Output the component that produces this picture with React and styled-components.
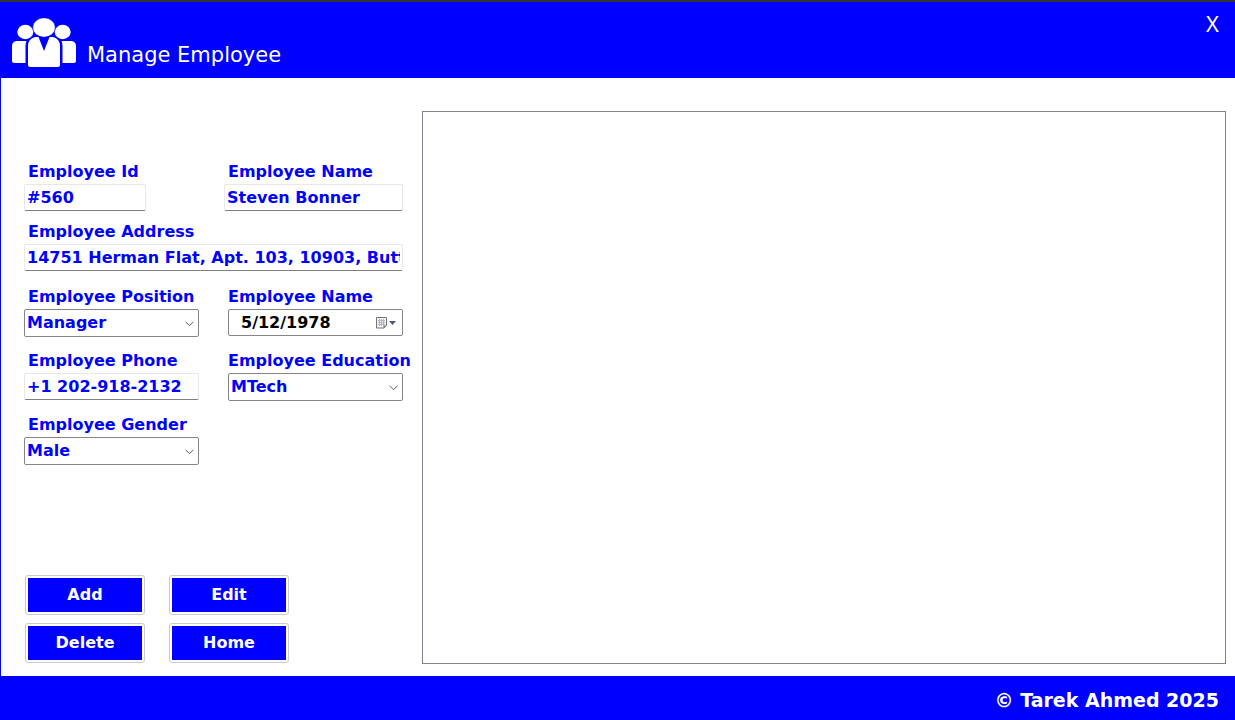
import React from "react";
import styled, { createGlobalStyle } from "styled-components";

const blue = "#0000ff";

const GlobalStyle = createGlobalStyle`
  * { box-sizing: border-box; }
  body {
    margin: 0;
    background: #fff;
    color: ${blue};
    font: bold 16px/20px "DejaVu Sans", Verdana, sans-serif;
  }
  input, select, button { font: inherit; color: inherit; margin: 0; }
`;

const Window = styled.div`
  min-height: 100vh;
  display: flex;
  flex-direction: column;
  border-top: 2px solid #333;
`;

const Header = styled.header`
  height: 76px;
  display: flex;
  align-items: flex-start;
  gap: 11px;
  padding: 7px 12px 0;
  background: ${blue};
  color: #fff;
`;

const Title = styled.h1`
  flex: 1;
  margin: 32px 0 0;
  font-size: 21px;
  line-height: 28px;
  font-weight: normal;
`;

const CloseButton = styled.button`
  padding: 0 4px;
  border: 0;
  background: none;
  font: 22px/28px "Noto Sans", sans-serif;
`;

const Logo = styled.svg`
  flex: none;
  margin-top: 9px;
`;

const Main = styled.main`
  flex: 1;
  display: flex;
  gap: 19px;
  padding: 33px 9px 12px 23px;
  border-left: 1px solid ${blue};
`;

const Form = styled.form`
  width: 379px;
  flex: none;
  display: flex;
  flex-direction: column;
  gap: 16px;
  padding-top: 51px;
`;

const Group = styled.div`
  display: flex;
  flex-direction: column;
  gap: ${(p) => p.$gap}px;
`;

const Row = styled.div`
  display: flex;
  justify-content: space-between;
`;

const FieldBox = styled.div`
  display: flex;
  flex-direction: column;
  gap: 2px;
  width: ${(p) => p.$width};
`;

const Label = styled.label`
  padding-left: ${(p) => (p.$flush ? 0 : 4)}px;
  white-space: nowrap;
`;

const TextInput = styled.input`
  width: 100%;
  height: 27px;
  padding: 0 2px;
  border: 1px solid #e8e8e8;
  border-bottom-color: #808080;
  border-radius: 2px;
  background: #fff;
  outline: none;
`;

const Framed = styled.div`
  position: relative;
  display: flex;
  align-items: center;
  height: ${(p) => p.$height}px;
  border: 1px solid #858585;
  border-radius: 2px;
  background: #fff;
`;

const Select = styled.select`
  width: 100%;
  height: 100%;
  padding: 0 20px 1px 2px;
  border: 0;
  background: none;
  appearance: none;
  outline: none;
`;

const Chevron = styled.svg`
  position: absolute;
  right: 4px;
  top: 11px;
  pointer-events: none;
`;

const DateInput = styled.input`
  flex: 1;
  min-width: 0;
  height: 100%;
  padding: 0 0 1px 12px;
  border: 0;
  background: none;
  color: #000;
  outline: none;
`;

const CalendarButton = styled.button`
  display: flex;
  padding: 0 5px 0 0;
  border: 0;
  background: none;
`;

const Actions = styled.div`
  display: grid;
  grid-template-columns: 120px 120px;
  gap: 8px 24px;
  margin: auto 0 1px 1px;
`;

const ActionButton = styled.button`
  height: 40px;
  padding: 2px;
  border: 1px solid #ccc;
  border-radius: 3px;
  background: ${blue} content-box;
  color: #fff;
`;

const Records = styled.section`
  flex: 1;
  border: 1px solid #828290;
`;

const Footer = styled.footer`
  height: 44px;
  padding: 12px 16px 0;
  background: ${blue};
  color: #fff;
  font-size: 19px;
  line-height: 24px;
  text-align: right;
`;

function PeopleIcon() {
  return (
    <Logo width="64" height="50" viewBox="0 0 64 50" fill="#fff" aria-hidden="true">
      <ellipse cx="13.3" cy="14" rx="8" ry="7.2" />
      <ellipse cx="50.7" cy="14" rx="8" ry="7.2" />
      <path d="M4 23h10.5Q13.500 25 13.500 28v17H2Q0 45 0 43V28Q0 24 4 23Z" />
      <path d="M60 23H49.500Q50.500 25 50.500 28v17H62Q64 45 64 43V28Q64 24 60 23Z" />
      <ellipse cx="32" cy="9.500" rx="11.200" ry="9.700" stroke={blue} strokeWidth="0.5" />
      <path d="M23 19h3.500L32 33l5.500-14H41Q48 21 48 28v19Q48 49 46 49H18Q16 49 16 47V28Q16 21 23 19Z" />
    </Logo>
  );
}

function CalendarIcon() {
  return (
    <svg width="22" height="14" viewBox="0 0 22 14" aria-hidden="true">
      <path d="M1.500 1.500h10v8l-2.500 2.500H1.500z" fill="#f2f2f2" stroke="#767070" />
      <path d="M3 4.500h7M3 6.500h7M3 8.500h7M4.500 3v7M6.500 3v7M8.500 3v7" stroke="#b0b8c0" />
      <path d="M8.500 12.500v-3h3.500z" fill="#8a8080" />
      <path d="M14 5h7l-3.500 4z" fill="#44597d" />
    </svg>
  );
}

function TextField({ id, label, value, width }) {
  return (
    <FieldBox $width={width}>
      <Label htmlFor={id}>{label}</Label>
      <TextInput id={id} defaultValue={value} />
    </FieldBox>
  );
}

function SelectField({ id, label, value, flush }) {
  return (
    <FieldBox $width="175px">
      <Label htmlFor={id} $flush={flush}>{label}</Label>
      <Framed $height={28}>
        <Select id={id} defaultValue={value}>
          <option>{value}</option>
        </Select>
        <Chevron width="9" height="6" viewBox="0 0 9 6" fill="none" stroke="#606060">
          <path d="M0.500 0.700l4 4 4-4" />
        </Chevron>
      </Framed>
    </FieldBox>
  );
}

export default function App() {
  return (
    <>
      <GlobalStyle />
      <Window>
        <Header>
          <PeopleIcon />
          <Title>Manage Employee</Title>
          <CloseButton type="button">X</CloseButton>
        </Header>
        <Main>
          <Form onSubmit={(e) => e.preventDefault()}>
            <Group $gap={11}>
              <Row>
                <TextField id="emp-id" label="Employee Id" value="#560" width="122px" />
                <TextField id="emp-name" label="Employee Name" value="Steven Bonner" width="179px" />
              </Row>
              <TextField
                id="emp-address"
                label="Employee Address"
                value="14751 Herman Flat, Apt. 103, 10903, Butte"
                width="100%"
              />
            </Group>
            <Group $gap={14}>
              <Row>
                <SelectField id="emp-position" label="Employee Position" value="Manager" />
                <FieldBox $width="175px">
                  <Label htmlFor="emp-date" $flush>Employee Name</Label>
                  <Framed $height={27}>
                    <DateInput id="emp-date" defaultValue="5/12/1978" />
                    <CalendarButton type="button" aria-label="Open calendar">
                      <CalendarIcon />
                    </CalendarButton>
                  </Framed>
                </FieldBox>
              </Row>
              <Row>
                <TextField id="emp-phone" label="Employee Phone" value="+1 202-918-2132" width="175px" />
                <SelectField id="emp-education" label="Employee Education" value="MTech" flush />
              </Row>
              <Row>
                <SelectField id="emp-gender" label="Employee Gender" value="Male" />
              </Row>
            </Group>
            <Actions>
              {["Add", "Edit", "Delete", "Home"].map((name) => (
                <ActionButton key={name} type="button">{name}</ActionButton>
              ))}
            </Actions>
          </Form>
          <Records aria-label="Employee records" />
        </Main>
        <Footer>© Tarek Ahmed 2025</Footer>
      </Window>
    </>
  );
}
